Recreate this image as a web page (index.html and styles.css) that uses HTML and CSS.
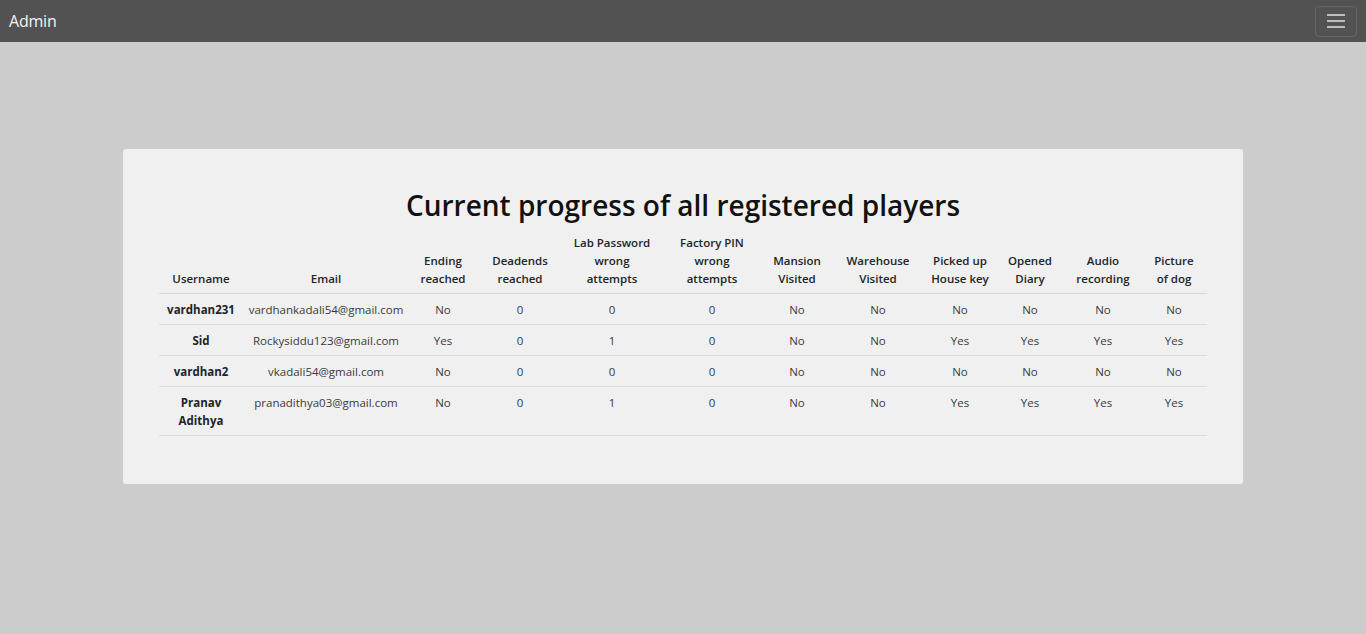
FILE: index.html
```html
<!DOCTYPE html>
<html lang="en">
<head>
<meta charset="utf-8">
<title>Admin</title>
<link rel="stylesheet" href="styles.css">
</head>
<body>
<nav class="navbar">
  <span class="brand">Admin</span>
  <button class="toggler" aria-label="Toggle navigation">
    <svg width="20" height="16" viewBox="0 0 20 16"><path d="M1 2h18M1 8h18M1 14h18" stroke="#bdbdbd" stroke-width="2"/></svg>
  </button>
</nav>
<main class="page">
  <section class="card">
    <h1 class="title">Current progress of all registered players</h1>
    <table class="progress">
      <colgroup>
        <col class="c-user"><col class="c-email"><col class="c-end"><col class="c-dead"><col class="c-lab"><col class="c-fac"><col class="c-man"><col class="c-ware"><col class="c-key"><col class="c-diary"><col class="c-audio"><col class="c-dog">
      </colgroup>
      <thead>
        <tr>
          <th>Username</th>
          <th>Email</th>
          <th>Ending<br>reached</th>
          <th>Deadends<br>reached</th>
          <th>Lab Password<br>wrong<br>attempts</th>
          <th>Factory PIN<br>wrong<br>attempts</th>
          <th>Mansion<br>Visited</th>
          <th>Warehouse<br>Visited</th>
          <th>Picked up<br>House key</th>
          <th>Opened<br>Diary</th>
          <th>Audio<br>recording</th>
          <th>Picture<br>of dog</th>
        </tr>
      </thead>
      <tbody>
        <tr>
          <th>vardhan231</th><td>vardhankadali54@gmail.com</td><td>No</td><td>0</td><td>0</td><td>0</td><td>No</td><td>No</td><td>No</td><td>No</td><td>No</td><td>No</td>
        </tr>
        <tr>
          <th>Sid</th><td>Rockysiddu123@gmail.com</td><td>Yes</td><td>0</td><td>1</td><td>0</td><td>No</td><td>No</td><td>Yes</td><td>Yes</td><td>Yes</td><td>Yes</td>
        </tr>
        <tr>
          <th>vardhan2</th><td>vkadali54@gmail.com</td><td>No</td><td>0</td><td>0</td><td>0</td><td>No</td><td>No</td><td>No</td><td>No</td><td>No</td><td>No</td>
        </tr>
        <tr>
          <th>Pranav<br>Adithya</th><td>pranadithya03@gmail.com</td><td>No</td><td>0</td><td>1</td><td>0</td><td>No</td><td>No</td><td>Yes</td><td>Yes</td><td>Yes</td><td>Yes</td>
        </tr>
      </tbody>
    </table>
  </section>
</main>
</body>
</html>
```

FILE: styles.css
```css
* { box-sizing: border-box; }
html, body { margin: 0; padding: 0; }
body {
  background: #cccccc;
  font-family: "Open Sans", "Noto Sans", "Liberation Sans", sans-serif;
  color: #212529;
  height: 634px;
  overflow: hidden;
}
.navbar {
  height: 42px;
  background: #525252;
  display: flex;
  align-items: center;
  justify-content: space-between;
  padding: 0 9px 0 9px;
}
.brand {
  color: #f4f4f4;
  font-size: 16px;
  letter-spacing: -0.2px;
}
.toggler {
  width: 42px;
  height: 31px;
  border: 1px solid #666666;
  border-radius: 4px;
  background: transparent;
  display: flex;
  align-items: center;
  justify-content: center;
  padding: 0;
}
.page {
  display: flex;
  justify-content: center;
  padding-top: 107px;
}
.card {
  width: 1120px;
  background: #f0f0f0;
  border-radius: 3px;
  padding: 38px 36px 48px;
  display: flex;
  flex-direction: column;
  align-items: center;
}
.title {
  margin: 0 0 4px;
  font-size: 28px;
  font-weight: 600;
  line-height: 36px;
  color: #111;
  letter-spacing: 0;
}
.progress {
  width: 1048px;
  border-collapse: collapse;
  table-layout: fixed;
  font-size: 11.5px;
  line-height: 18px;
}
.progress th, .progress td {
  padding: 6px 0;
  text-align: center;
  vertical-align: top;
  white-space: nowrap;
}
.progress thead th {
  vertical-align: bottom;
  font-weight: 600;
  color: #212529;
  padding-top: 7px;
  padding-bottom: 5px;
  border-bottom: 1px solid #d8d8d8;
}
.progress tbody th {
  font-weight: 700;
  color: #212529;
  padding-top: 7px;
  padding-bottom: 5px;
}
.progress tbody td {
  color: #3a3a3a;
  padding-top: 7px;
  padding-bottom: 5px;
}
.progress tbody tr { border-bottom: 1px solid #dddddd; }
.c-user { width: 84px; }
.c-email { width: 166px; }
.c-end { width: 68px; }
.c-dead { width: 86px; }
.c-lab { width: 98px; }
.c-fac { width: 102px; }
.c-man { width: 68px; }
.c-ware { width: 94px; }
.c-key { width: 70px; }
.c-diary { width: 70px; }
.c-audio { width: 76px; }
.c-dog { width: 66px; }
```
